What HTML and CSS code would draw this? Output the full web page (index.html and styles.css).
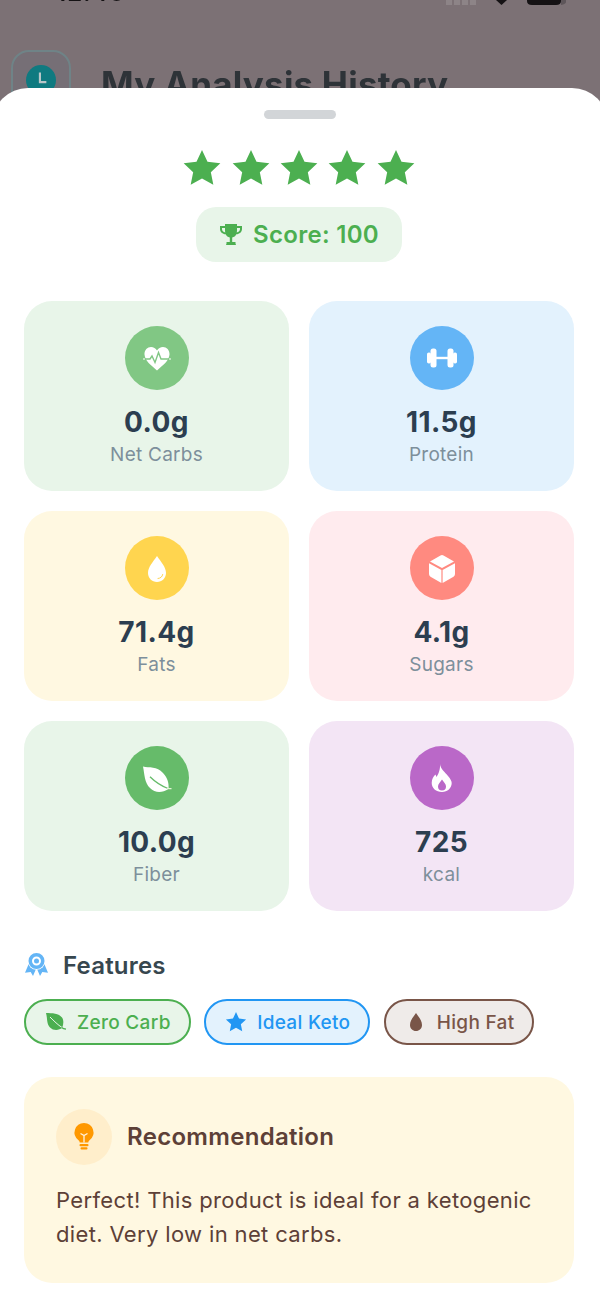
FILE: index.html
```html
<!DOCTYPE html>
<html lang="en">
<head>
<meta charset="utf-8">
<title>Analysis</title>
<link rel="stylesheet" href="styles.css">
</head>
<body>
<div class="screen">
  <div class="behind">
    <div class="status">
      <span class="time">12:46</span>
      <span class="status-right">
        <svg class="signal" width="30" height="6" viewBox="0 0 30 6"><path d="M0 0h6v5H0zM8 0h6v5H8zM16 0h6v5h-6zM24 0h6v5h-6z"/></svg>
        <svg class="wifi" width="11" height="5" viewBox="0 0 11 5"><path d="M0 0h11L5.500 5z"/></svg>
        <svg class="battery" width="40" height="6" viewBox="0 0 40 6"><path d="M0 0h34v1q0 4-5 4H5Q0 5 0 1z"/><path class="batt-end" d="M34 0h5v2q0 2-5 3z"/></svg>
      </span>
    </div>
    <div class="head">
      <div class="head-icon"><svg width="30" height="30" viewBox="0 0 28 28"><circle cx="14" cy="14" r="14" fill="#0f7a80"/><path d="M13 7v9h6" fill="none" stroke="#b9c6c8" stroke-width="2"/></svg></div>
      <div class="head-title">My Analysis History</div>
    </div>
  </div>

  <section class="sheet">
    <div class="handle"></div>
    <div class="stars">
      <svg viewBox="0 0 24 24"><path d="M12 1.200l3.300 7.100 7.700.9-5.700 5.300 1.500 7.600L12 18.300l-6.800 3.800 1.500-7.600L1 9.200l7.700-.9z"/></svg>
      <svg viewBox="0 0 24 24"><path d="M12 1.200l3.300 7.100 7.700.9-5.700 5.300 1.500 7.600L12 18.300l-6.800 3.800 1.500-7.600L1 9.200l7.700-.9z"/></svg>
      <svg viewBox="0 0 24 24"><path d="M12 1.200l3.300 7.100 7.700.9-5.700 5.300 1.500 7.600L12 18.300l-6.800 3.800 1.500-7.600L1 9.200l7.700-.9z"/></svg>
      <svg viewBox="0 0 24 24"><path d="M12 1.200l3.300 7.100 7.700.9-5.700 5.300 1.500 7.600L12 18.300l-6.800 3.800 1.500-7.600L1 9.200l7.700-.9z"/></svg>
      <svg viewBox="0 0 24 24"><path d="M12 1.200l3.300 7.100 7.700.9-5.700 5.300 1.500 7.600L12 18.300l-6.800 3.800 1.500-7.600L1 9.200l7.700-.9z"/></svg>
    </div>
    <div class="score-wrap">
      <div class="score">
        <svg width="24" height="24" viewBox="0 0 24 24"><path fill="#4caf50" d="M6 1h12v2h5v3c0 3-2.500 5.200-5.700 5.300C16.500 13 15 14.200 13.200 14.500V19h3.300v1.500L17 22H7l.5-1.500V19h3.300v-4.500C9 14.200 7.500 13 6.700 11.300 3.500 11.200 1 9 1 6V3h5zM3 5v1c0 1.700 1.300 3 3.300 3.400C6.100 8.700 6 8 6 7.200V5zm18 0h-3v2.200c0 .8-.1 1.500-.3 2.200C19.700 9 21 7.700 21 6z"/></svg>
        <span>Score: 100</span>
      </div>
    </div>

    <div class="grid">
      <div class="card card-green">
        <div class="circle c-carbs"><svg width="32" height="32" viewBox="0 0 32 32"><path fill="#fff" d="M16 28.500C10 23 4 19 3.500 12.500 3.200 8 6.500 5 10 5c2.500 0 4.700 1.300 6 3.500C17.300 6.300 19.500 5 22 5c3.500 0 6.800 3 6.500 7.500C28 19 22 23 16 28.500z"/><path fill="none" stroke="#81c784" stroke-width="1.400" d="M3 17h6l2-3 3 6.500 3.500-10 2.500 6.500h8"/><path fill="none" stroke="#fff" stroke-width="1" d="M2 17h2M28 17h2"/></svg></div>
        <div class="value">0.0g</div>
        <div class="label">Net Carbs</div>
      </div>
      <div class="card card-blue">
        <div class="circle c-protein"><svg width="32" height="32" viewBox="0 0 32 32"><rect x="10" y="14.800" width="12" height="2.400" fill="#fff"/><rect x="4.500" y="6.500" width="6" height="19" rx="2.500" fill="#fff"/><rect x="21.500" y="6.500" width="6" height="19" rx="2.500" fill="#fff"/><rect x="1" y="10.500" width="4" height="11" rx="1.800" fill="#fff"/><rect x="27" y="10.500" width="4" height="11" rx="1.800" fill="#fff"/></svg></div>
        <div class="value">11.5g</div>
        <div class="label">Protein</div>
      </div>
      <div class="card card-yellow">
        <div class="circle c-fats"><svg width="32" height="32" viewBox="0 0 32 32"><path fill="#fff" d="M16 4c4 6 9 11 9 17 0 5-4 9-9 9s-9-4-9-9C7 15 12 10 16 4z"/><path fill="none" stroke="#ffd54f" stroke-width="1" stroke-linecap="round" d="M17 26.500c2.500-.2 4.300-1.700 4.700-4"/></svg></div>
        <div class="value">71.4g</div>
        <div class="label">Fats</div>
      </div>
      <div class="card card-pink">
        <div class="circle c-sugars"><svg width="32" height="32" viewBox="0 0 32 32"><path fill="#fff" d="M14.500 3.400q1.500-.8 3 0l10.500 6-12 6.600-12-6.600zM3 11.200l12.400 6.800V31l-10.900-6.300Q3 23.800 3 22zM29 11.200V22q0 1.800-1.500 2.700L16.600 31V18z"/></svg></div>
        <div class="value">4.1g</div>
        <div class="label">Sugars</div>
      </div>
      <div class="card card-green">
        <div class="circle c-fiber"><svg width="32" height="32" viewBox="0 0 32 32"><path fill="#fff" d="M2 4.500C8 6 16 4 22 11c5 5 6 11 5.500 16C21 31 14 31 9 26 3.500 21 3.500 12 2 4.500z"/><path fill="none" stroke="#66bb6a" stroke-width="1.300" d="M9 14.700c5 5 11 9 18 11.800"/><path fill="none" stroke="#e6f4d8" stroke-width="1.300" stroke-linecap="round" d="M26.500 26.300c1.200.2 2.300.3 3.500.4"/></svg></div>
        <div class="value">10.0g</div>
        <div class="label">Fiber</div>
      </div>
      <div class="card card-purple">
        <div class="circle c-kcal"><svg width="32" height="32" viewBox="0 0 32 32"><path fill="#fff" fill-rule="evenodd" d="M14 2c.5 5 5 8 8 12 2.500 3 3.700 5 3.700 7 0 5-4.200 9-9.700 9-6 0-10.300-4-10.300-9 0-4 1.800-6.500 3.800-8.500l1 2.500C12.500 12 14.500 7 14 2zm2 15.500c-2 3-4 4.500-4 7a4 4 0 0 0 8 0c0-2.500-2-4-4-7z"/></svg></div>
        <div class="value">725</div>
        <div class="label">kcal</div>
      </div>
    </div>

    <div class="features-head">
      <svg width="25" height="26" viewBox="0 0 25 26"><path fill="#64b5f6" d="M5 11.300L1 20.700l5.700-.7L9 24l3.300-7.700zM20 11.300l4 9.400-5.700-.7L16 24l-3.300-7.700z"/><circle cx="12.500" cy="9" r="8.800" fill="#fff"/><path fill="#64b5f6" fill-rule="evenodd" d="M12.500 1a8 8 0 1 1 0 16 8 8 0 0 1 0-16zm0 3.500a4.500 4.500 0 1 0 0 9 4.500 4.500 0 0 0 0-9z"/><circle cx="12.500" cy="9" r="2.500" fill="#64b5f6"/></svg>
      <h2>Features</h2>
    </div>
    <div class="chips">
      <div class="chip chip-green">
        <svg width="22" height="22" viewBox="0 0 22 22"><path fill="#4caf50" d="M1 2c6 0 13 .500 16 4.500 2 2.800 1.500 7 .2 10.300C14 19.500 8.500 20 5 16.500 1.500 13 2.500 7 1 2z"/><path fill="none" stroke="#e8f5e9" stroke-width="1" d="M5 6c4 4 8 8 12 10.500"/><path fill="none" stroke="#4caf50" stroke-width="1.200" d="M16.500 16.500c1.500 1 3 1.500 4.500 1.700"/></svg>
        <span>Zero Carb</span>
      </div>
      <div class="chip chip-blue">
        <svg width="22" height="22" viewBox="0 0 24 24"><path fill="#2196f3" d="M12 1.200l3.300 7.100 7.700.9-5.700 5.300 1.500 7.600L12 18.300l-6.800 3.800 1.500-7.600L1 9.200l7.700-.9z"/></svg>
        <span>Ideal Keto</span>
      </div>
      <div class="chip chip-brown">
        <svg width="22" height="22" viewBox="0 0 22 22"><path fill="#795548" d="M11 2c2.500 4 6 7 6 12 0 3.500-2.700 6-6 6s-6-2.500-6-6c0-5 3.500-8 6-12z"/></svg>
        <span>High Fat</span>
      </div>
    </div>

    <div class="rec">
      <div class="rec-head">
        <div class="rec-icon"><svg width="24" height="30" viewBox="0 0 24 30"><path fill="#ff9800" d="M12 1a9.500 9.500 0 0 1 5.500 17.200c-.8.600-1.200 1.300-1.200 2.300H7.700c0-1-.4-1.700-1.200-2.300A9.500 9.500 0 0 1 12 1z"/><path fill="none" stroke="#fff3e0" stroke-width="1.300" d="M8.500 11.500l3.500 2 3.500-2M12 13.500v7"/><rect x="7.500" y="22" width="9" height="2.200" rx="1" fill="#ff9800"/><rect x="8.500" y="25.300" width="7" height="2.200" rx="1" fill="#ff9800"/></svg></div>
        <h3>Recommendation</h3>
      </div>
      <p>Perfect! This product is ideal for a ketogenic diet. Very low in net carbs.</p>
    </div>
  </section>
</div>
</body>
</html>
```

FILE: styles.css
```css
* { box-sizing: border-box; }
html, body { margin: 0; padding: 0; }
body { font-family: Inter, "Liberation Sans", sans-serif; }
.screen { position: relative; width: 600px; height: 1300px; overflow: hidden; background: #7c7175; }
.behind { height: 100px; overflow: hidden; filter: blur(0.6px); }
.status { height: 5px; display: flex; justify-content: space-between; padding: 0 33px 0 56px; color: #151214; position: relative; }
.time { font-size: 24px; font-weight: 600; line-height: 24px; margin-top: -19px; letter-spacing: 1px; }
.status-right { display: flex; align-items: flex-start; gap: 20px; }
.signal { fill: #8d8487; }
.wifi { fill: #151214; }
.battery { fill: #151214; }
.batt-end { fill: #5e565a; }
.head { display: flex; gap: 30px; padding: 45px 0 0 11px; }
.head-icon { width: 60px; height: 60px; border: 2px solid #6f8387; border-radius: 18px; background: #766f76; display: flex; align-items: center; justify-content: center; flex: none; }
.head-title { font-size: 35px; font-weight: 700; color: #2e3338; line-height: 40px; margin-top: 14px; white-space: nowrap; letter-spacing: 0.2px; }

.sheet { position: absolute; left: -8px; right: -8px; top: 88px; bottom: 0; background: #fff; border-radius: 36px 36px 0 0; padding: 22px 34px 0 32px; }
.handle { width: 72px; height: 9px; border-radius: 5px; background: #d2d5d8; margin-left: 240px; }
.stars { display: flex; justify-content: center; gap: 8.400px; margin-top: 29px; }
.stars svg { width: 40px; height: 40px; fill: #4caf50; }
.score-wrap { display: flex; justify-content: center; margin-top: 19px; }
.score { display: flex; align-items: center; gap: 10px; height: 55px; padding: 0 23px; border-radius: 20px; background: #e8f5e9; color: #4caf50; font-size: 24px; font-weight: 600; letter-spacing: 0.3px; }

.grid { display: grid; grid-template-columns: 265px 265px; gap: 20px; margin-top: 39px; }
.card { height: 190px; border-radius: 28px; display: flex; flex-direction: column; align-items: center; padding-top: 25px; }
.card-green { background: #e8f5e9; }
.card-blue { background: #e3f2fd; }
.card-yellow { background: #fff8e1; }
.card-pink { background: #ffebee; }
.card-purple { background: #f3e5f5; }
.circle { width: 64px; height: 64px; border-radius: 50%; display: flex; align-items: center; justify-content: center; }
.c-carbs { background: #81c784; }
.c-protein { background: #64b5f6; }
.c-fats { background: #ffd54f; }
.c-sugars { background: #ff8a80; }
.c-fiber { background: #66bb6a; }
.c-kcal { background: #ba68c8; }
.value { font-size: 28px; font-weight: 700; line-height: 34px; color: #2c3e50; margin-top: 15px; letter-spacing: 0.4px; }
.label { font-size: 19px; line-height: 22px; color: #7d8f9b; margin-top: 5px; letter-spacing: 0.25px; }

.features-head { display: flex; align-items: center; gap: 14px; margin-top: 40px; height: 28px; }
.features-head h2 { margin: 0; font-size: 24px; font-weight: 600; color: #37474f; letter-spacing: 0.2px; }
.chips { display: flex; gap: 13.500px; margin-top: 20px; }
.chip { display: flex; align-items: center; gap: 10px; height: 46px; padding: 0 18px 0 19px; border-radius: 23px; border: 2px solid; font-size: 19px; font-weight: 500; letter-spacing: 0.3px; }
.chip-green { color: #4caf50; border-color: #4caf50; background: #e8f5e9; }
.chip-blue { color: #2196f3; border-color: #2196f3; background: #e3f2fd; }
.chip-brown { color: #795548; border-color: #795548; background: #efebe9; }

.rec { margin-top: 32px; height: 206px; border-radius: 28px; background: #fff8e1; padding: 32px; }
.rec-head { display: flex; align-items: center; gap: 15px; height: 56px; }
.rec-icon { width: 56px; height: 56px; border-radius: 50%; background: #ffeecb; display: flex; align-items: center; justify-content: center; flex: none; }
.rec-head h3 { margin: -2px 0 0; font-size: 24px; font-weight: 600; color: #5d4037; letter-spacing: 0.3px; }
.rec p { margin: 18px 0 0; font-size: 22px; line-height: 34px; color: #5d4037; letter-spacing: 0.35px; }
```
